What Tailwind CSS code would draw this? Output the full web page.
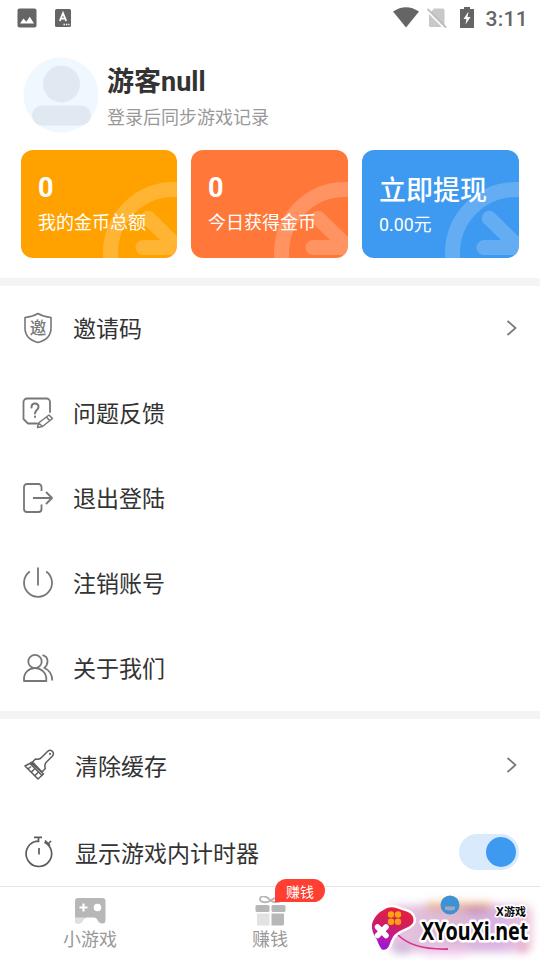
<!DOCTYPE html>
<html lang="zh-CN">
<head>
<meta charset="utf-8">
<title>我的</title>
<script src="https://cdn.jsdelivr.net/npm/@tailwindcss/browser@4"></script>
</head>
<body class="bg-white">
<div class="relative flex h-[960px] w-[540px] flex-col overflow-hidden bg-white font-['Noto_Sans_CJK_SC',sans-serif] text-[#333]">

  <!-- status bar -->
  <header class="flex h-9 shrink-0 items-center justify-between pl-[17px] pr-[12px]">
    <div class="flex items-center gap-[18px]">
      <svg class="size-5" viewBox="0 0 20 20"><rect x="0.5" y="0.5" width="19" height="19" rx="2" fill="#656565"/><path d="M3 15.500l3.500-5 2.800 3.300 3.500-5 4.200 6.700z" fill="#fff"/></svg>
      <svg class="h-5 w-4" viewBox="0 0 16 20"><rect y="1" width="16" height="18" rx="1.500" fill="#656565"/><path d="M4.800 13L8 5.200 11.200 13M6 10.600h4" fill="none" stroke="#fff" stroke-width="1.800"/><path d="M8.500 16.500h1.400m1 0h1.400m1 0h1.200" stroke="#fff" stroke-width="1.300"/></svg>
    </div>
    <div class="flex items-center">
      <svg class="h-[22px] w-[26px]" viewBox="0 0 26 22"><path d="M0 4.500Q13-4 26 4.500L13 20.500z" fill="#656565"/></svg>
      <svg class="ml-[8px] h-[22px] w-5" viewBox="0 0 20 22"><path d="M7 1.500h9a1.500 1.500 0 0 1 1.500 1.500V20h-14A1.500 1.500 0 0 1 2 18.500V7z" fill="#c8c8c8"/><path d="M0 3L18.500 21.500" stroke="#fff" stroke-width="3"/><path d="M.5 2L19 20.500" stroke="#bdbdbd" stroke-width="1.800"/></svg>
      <svg class="ml-[13px] h-[22px] w-[14px]" viewBox="0 0 14 22"><path d="M4 0h6v2h4v19H0V2h4z" fill="#656565"/><path d="M8.500 4.500L3.500 12h3L5.500 17.500l5-7.500h-3z" fill="#fff"/></svg>
      <span class="ml-[11px] pt-[2px] font-['Roboto'] text-[21px] leading-8 font-medium tracking-[0.3px] text-[#656565]">3:11</span>
    </div>
  </header>

  <!-- profile -->
  <section class="flex h-[114px] shrink-0 pl-[23px] pt-[21px]">
    <svg class="size-[76px]" viewBox="0 0 76 76"><circle cx="38" cy="38" r="37.500" fill="#eff7ff"/><circle cx="38.500" cy="27" r="18.500" fill="#e0e8f2"/><rect x="9" y="48.500" width="59" height="20" rx="10" fill="#e0e8f2"/></svg>
    <div class="ml-2 flex flex-col pt-[7px]">
      <h1 class="h-[32px] text-[27px] leading-[32px] font-bold">游客<span class="font-['Roboto']">null</span></h1>
      <p class="mt-[8px] text-[18px] leading-6 text-[#999]">登录后同步游戏记录</p>
    </div>
  </section>

  <!-- balance cards -->
  <section class="flex h-[128px] shrink-0 gap-[14px] px-[21px] text-white">
    <div class="relative h-[108px] w-[156px] overflow-hidden rounded-xl bg-[#ffa200] pl-[17px] pt-[22px]">
      <svg class="absolute inset-0 h-[108px] w-[157px]" viewBox="0 0 157 108"><circle cx="153" cy="103" r="63.500" fill="none" stroke="#fff" stroke-opacity=".2" stroke-width="15"/><path d="M121.700 73.300a7.500 7.500 0 0 1 10.600-10.600L157 87v21h-2l-3-3H122a7.500 7.500 0 0 1 0-15h17z" fill="#fff" fill-opacity=".2"/></svg>
      <div class="relative font-['Roboto'] text-[27px] leading-8 font-bold">0</div>
      <div class="relative mt-[5px] text-[18px] leading-6">我的金币总额</div>
    </div>
    <div class="relative h-[108px] w-[157px] overflow-hidden rounded-xl bg-[#ff783a] pl-[17px] pt-[22px]">
      <svg class="absolute inset-0 h-[108px] w-[157px]" viewBox="0 0 157 108"><circle cx="154" cy="103" r="63.500" fill="none" stroke="#fff" stroke-opacity=".2" stroke-width="15"/><path d="M121.700 73.300a7.500 7.500 0 0 1 10.600-10.600L157 87v21h-2l-3-3H122a7.500 7.500 0 0 1 0-15h17z" fill="#fff" fill-opacity=".2"/></svg>
      <div class="relative font-['Roboto'] text-[27px] leading-8 font-bold">0</div>
      <div class="relative mt-[5px] text-[18px] leading-6">今日获得金币</div>
    </div>
    <div class="relative h-[108px] w-[157px] overflow-hidden rounded-xl bg-[#3e99f0] pl-[17px] pt-[21px]">
      <svg class="absolute inset-0 h-[108px] w-[157px]" viewBox="0 0 157 108"><circle cx="154" cy="103" r="63.500" fill="none" stroke="#fff" stroke-opacity=".2" stroke-width="15"/><path d="M121.700 73.300a7.500 7.500 0 0 1 10.600-10.600L157 87v21h-2l-3-3H122a7.500 7.500 0 0 1 0-15h17z" fill="#fff" fill-opacity=".2"/></svg>
      <div class="relative text-[27px] leading-9 font-medium">立即提现</div>
      <div class="relative mt-[6px] font-['Roboto','Noto_Sans_CJK_SC',sans-serif] text-[17.800px] leading-6">0.00元</div>
    </div>
  </section>

  <div class="h-2 shrink-0 bg-[#f4f4f4]"></div>

  <!-- account menu -->
  <nav class="flex h-[425px] shrink-0 flex-col text-[23px]">
    <a class="flex h-[83px] shrink-0 items-center pl-[22px] pr-[22px]">
      <svg class="size-8" viewBox="0 0 32 32" fill="none" stroke="#777" stroke-width="1.600" stroke-linejoin="round"><path d="M16 1.500Q21 4.500 29 5.500V16Q29 27 16 30.500Q3 27 3 16V5.500Q11 4.500 16 1.500z"/><text x="16" y="22" text-anchor="middle" font-size="16.500" font-weight="500" fill="#777" stroke="none">邀</text></svg>
      <span class="ml-[19px] grow">邀请码</span>
      <svg class="h-4 w-3" viewBox="0 0 12 16" fill="none" stroke="#777" stroke-width="1.700"><path d="M1.500 1l8 7-8 7"/></svg>
    </a>
    <a class="flex h-[87px] shrink-0 items-center pl-[22px]">
      <svg class="size-8" viewBox="0 0 32 32" fill="none" stroke="#777" stroke-width="1.800" stroke-linejoin="round" stroke-linecap="round"><path d="M28 15V5a3.500 3.500 0 0 0-3.500-3.500H5A3.500 3.500 0 0 0 1.500 5v17L6 26.500h9"/><path d="M9.500 10.500Q9.500 6.500 13 6.500T16.500 10C16.500 13 13 13 13 16.500M13 19.500v.5" stroke-width="2"/><path d="M15.500 30.500l1-4.500L27 18l3.500 3.500L20.500 29.500zM24.500 20l3 3.500M16.500 26l4 3.500" stroke-width="1.500"/></svg>
      <span class="ml-[19px]">问题反馈</span>
    </a>
    <a class="flex h-[83px] shrink-0 items-center pl-[22px]">
      <svg class="size-8" viewBox="0 0 32 32" fill="none" stroke="#777" stroke-width="1.800" stroke-linejoin="round"><path d="M19.500 9V5A3 3 0 0 0 16.500 2H5a3 3 0 0 0-3 3v22a3 3 0 0 0 3 3h11.500a3 3 0 0 0 3-3V22.500"/><path d="M11 16h18.500M24 10l6 6-6 6"/></svg>
      <span class="ml-[19px]">退出登陆</span>
    </a>
    <a class="flex h-[87px] shrink-0 items-center pl-[22px]">
      <svg class="size-8" viewBox="0 0 32 32" fill="none" stroke="#777" stroke-width="1.800"><path d="M16 .5v18M7.800 4.500a14 14 0 1 0 16.400 0"/></svg>
      <span class="ml-[19px]">注销账号</span>
    </a>
    <a class="flex h-[83px] shrink-0 items-center pl-[22px]">
      <svg class="size-8" viewBox="0 0 32 32" fill="none" stroke="#777" stroke-width="1.800" stroke-linejoin="round"><circle cx="13" cy="9.500" r="6.700"/><path d="M2 29v-2C2 20.500 7 16.200 13 16.200S24.300 20.500 24.300 27v2zM20.500 3.200q5 1 5 6.300 0 3.700-3.200 6.500Q30 19 30.300 28.500"/></svg>
      <span class="ml-[19px]">关于我们</span>
    </a>
  </nav>

  <div class="h-2 shrink-0 bg-[#f4f4f4]"></div>

  <!-- settings -->
  <section class="flex h-[167px] shrink-0 flex-col text-[23px]">
    <a class="flex h-[92px] shrink-0 items-center pl-[23px] pr-[22px]">
      <svg class="size-8" viewBox="0 0 32 32" fill="none" stroke="#5c5c5c" stroke-width="1.500" stroke-linejoin="round" stroke-linecap="round"><path d="M9.500 13L12.500 10q4 1 6.500-2l5.500-5.500q3-2.500 5 0t-.5 5L23.500 13q-2.500 2.500-1.200 6.500L19 23zM9.500 13L2 17l13 13 5.500-5L8 13.500M5.500 19.500l2-1.500M9 22.500l2-2M12.500 26l2-2M7 14.500L19 26.500"/><path d="M27 4.800v.2" stroke-width="2"/></svg>
      <span class="ml-[20px] grow">清除缓存</span>
      <svg class="h-4 w-3" viewBox="0 0 12 16" fill="none" stroke="#777" stroke-width="1.700"><path d="M1.500 1l8 7-8 7"/></svg>
    </a>
    <div class="flex h-[82px] shrink-0 items-center pl-[23px] pr-[21px]">
      <svg class="size-8" viewBox="0 0 32 32" fill="none" stroke="#5c5c5c" stroke-width="1.700"><path d="M12 5.500A12.800 12.800 0 1 0 21.500 6.200M11 1.300h8M15.500 1.300v4H12M16 12v6.500M22 4.500l5 5M25 8l3-3"/></svg>
      <span class="ml-[20px] grow pt-px">显示游戏内计时器</span>
      <span class="flex h-9 w-[60px] items-center justify-end rounded-full bg-[#d8eafc] pr-[3px]"><span class="size-[30px] rounded-full bg-[#3e99f0]"></span></span>
    </div>
  </section>

  <!-- tab bar -->
  <footer class="absolute inset-x-0 bottom-0 flex h-[74px] border-t border-[#e5e5e5] bg-white text-[18px] leading-6 text-[#999]">
    <a class="flex flex-1 flex-col items-center pt-[9px]">
      <svg class="h-[30px] w-[31px]" viewBox="0 0 31 30"><path d="M0 5A3 3 0 0 1 3 2h24.500a3 3 0 0 1 3 3v19q0 3.500-3 3.500-3.500 0-5-3.500-1-2.500-3.500-2.500h-7.500Q9 21.500 8 24q-1.500 3.500-5 3.500-3 0-3-3.500z" fill="#b7b7b7"/><path d="M0 21.500h10Q8.500 22.500 8 24q-1.500 3.500-5 3.500-3 0-3-3.500z" fill="#e0e0e0"/><path d="M8.500 7.500v8M4.500 11.500h8" stroke="#fff" stroke-width="2.200"/><circle cx="22.500" cy="11.500" r="3.800" fill="#fff"/></svg>
      <span>小游戏</span>
    </a>
    <a class="relative flex flex-1 flex-col items-center pt-[9px]">
      <svg class="h-[30px] w-[31px]" viewBox="0 0 31 30"><path d="M15.500 4.500C12-.5 5-1 5 3s7 4 10.500 1.500S26-1 26 3s-7 4-10.500 1.500z" fill="none" stroke="#b7b7b7" stroke-width="1.800"/><rect x=".5" y="9" width="14" height="7" rx="1.500" fill="#b7b7b7"/><rect x="16.500" y="9" width="14" height="7" rx="1.500" fill="#b7b7b7"/><path d="M2 17.500h12.500v12H3.500A1.500 1.500 0 0 1 2 28z" fill="#e2e2e2"/><path d="M16.500 17.500H29V28a1.500 1.500 0 0 1-1.500 1.500h-11z" fill="#b7b7b7"/></svg>
      <span>赚钱</span>
      <span class="absolute -top-[8px] left-[95px] flex h-[23px] w-[50px] items-center justify-center rounded-[12px] rounded-bl-none bg-[#ff3f32] text-[14px] leading-none text-white">赚钱</span>
    </a>
    <a class="flex-1"></a>
  </footer>

  <!-- site logo over the last tab -->
  <svg class="absolute bottom-0 right-0 h-[80px] w-[180px]" viewBox="0 0 180 80">
    <defs>
      <linearGradient id="pad" x1="0.600" y1="0" x2="0.300" y2="1"><stop offset="0" stop-color="#e5203c"/><stop offset=".45" stop-color="#d01c62"/><stop offset=".72" stop-color="#bb1aa8"/><stop offset="1" stop-color="#9416dc"/></linearGradient>
      <linearGradient id="glow" x1="0" x2="1"><stop offset="0" stop-color="#dfb8dc"/><stop offset=".45" stop-color="#d2a6c8"/><stop offset=".75" stop-color="#cf9ede"/><stop offset="1" stop-color="#ecb8d0"/></linearGradient>
      <filter id="soft" x="-20%" y="-40%" width="140%" height="180%"><feGaussianBlur stdDeviation="4"/></filter>
    </defs>
    <g filter="url(#soft)">
      <rect x="28" y="25" width="144" height="47" rx="9" fill="url(#glow)" opacity=".8"/>
      <path d="M66 26h66" stroke="#e99a4a" stroke-width="7" opacity=".6"/>
      <path d="M106 30h20" stroke="#8b4b98" stroke-width="6" opacity=".35"/>
      <path d="M66 71h40" stroke="#f0c8ee" stroke-width="8"/>
      <path d="M160 69h8" stroke="#e04875" stroke-width="6" opacity=".5"/>
      <path d="M34 70h15" stroke="#8580c0" stroke-width="7" opacity=".4"/>
    </g>
    <circle cx="90" cy="25" r="9.500" fill="#3e91d4"/>
    <path d="M85 26.500h10v3q-5 2-10 0z" fill="#9fa8bc"/>
    <path d="M37 54Q52 70 88 69" fill="none" stroke="#d93694" stroke-width="1.800"/>
    <path d="M20 32L27 28Q33 26 39 29L48 32Q54 35 53.500 41Q53 45 46 48Q38 51 33.500 56Q31 60 29 66Q26 71 22 69.500Q20 68 17 60Q11 51 12 44Q14 37 20 32z" fill="url(#pad)" stroke="#fff" stroke-width="5" paint-order="stroke" stroke-linejoin="round"/>
    <path d="M17.500 47l8.500 8.500M26 47l-8.500 8.500" stroke="#fff" stroke-width="5.500" stroke-linecap="round"/>
    <g fill="#ffa114"><circle cx="31" cy="34.500" r="3.200"/><circle cx="38" cy="34.500" r="3.200"/><circle cx="31" cy="41.800" r="3.200"/><circle cx="38" cy="41.800" r="3.200"/></g>
    <g fill="#050505" stroke="#fff" paint-order="stroke" stroke-linejoin="round" font-weight="700">
      <text transform="translate(61 60) scale(.805 1)" font-size="24.500" stroke-width="5" font-family="Noto Sans">XYouXi.net</text>
      <text x="136" y="36" font-size="11" stroke-width="3"><tspan font-family="Noto Sans" font-size="12">X</tspan>游戏</text>
    </g>
  </svg>
</div>
</body>
</html>
